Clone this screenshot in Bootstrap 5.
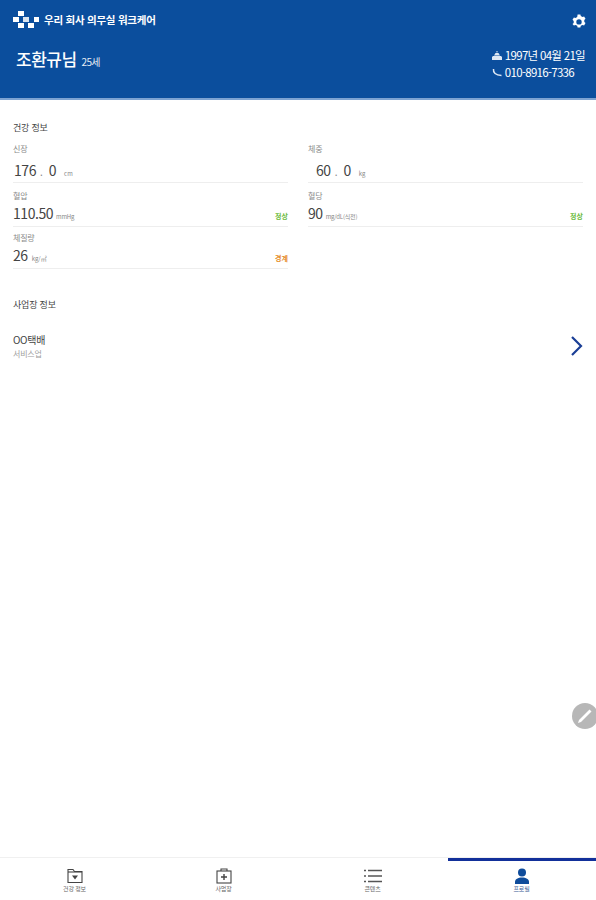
<!DOCTYPE html>
<html lang="ko">
<head>
<meta charset="utf-8">
<title>프로필</title>
<link href="https://cdn.jsdelivr.net/npm/bootstrap@5.3.0/dist/css/bootstrap.min.css" rel="stylesheet">
<style>
html,body{height:100%;overflow:hidden}
body{font-family:"Noto Sans CJK KR","Noto Sans",sans-serif;color:#333;background:#fff}
.app-shell{height:900px;position:relative}
.hero{height:100px;background:#0b4e9d;border-bottom:2px solid #7da3d2;color:#fff;padding:11px 11px 0 13px}
.brand-text{font-size:10.5px;font-weight:700;letter-spacing:-.25px;line-height:18px;margin-left:5px}
.gear{margin-top:3px;margin-right:-1px}
.hero-main{margin-top:14px;padding-left:3px}
.person{font-size:17px;font-weight:500;letter-spacing:-.5px;line-height:24px;padding-top:4px}
.person-age{font-size:10px;letter-spacing:-.7px;font-weight:400;margin-left:5px;opacity:.9}
.contact{font-size:11.5px;letter-spacing:-.7px;line-height:17px;margin-top:4px}
.contact div{display:flex;align-items:center;gap:3px}
.content{padding:21px 13px 0}
.sect{font-size:9px;line-height:14px;color:#444;letter-spacing:-.2px}
.cell-l{padding-right:10px}.cell-r{padding-left:10px}
.metric{border-bottom:1px solid #eeeeee}
.metric-a{height:40px;margin-top:8px}
.metric-b{height:37px;margin-top:7px}
.metric-c{height:37px;margin-top:5px}
.m-label{font-size:8px;line-height:12px;color:#8a8a8a;letter-spacing:-.2px}
.m-line{display:flex;align-items:baseline;line-height:18px;margin-top:2px}
.metric-a .m-line{margin-top:6px;padding-left:1px}
.cell-r .metric-a .m-line{padding-left:8px}
.num{font-size:14px;color:#444;letter-spacing:-.45px}
.dot{font-size:10px;color:#888;margin:0 6px 0 4px}
.unit{font-size:6px;color:#888;margin-left:4px}
.unit-wide{margin-left:3px;letter-spacing:-.2px}
.state{font-size:7px;font-weight:700;margin-left:auto}
.ok{color:#6cbb3c}.warn{color:#e58a1f}
.workplace{margin-top:16px;height:36px}
.wp-name{font-size:10px;line-height:14px;color:#444;letter-spacing:-.3px}
.wp-kind{font-size:8px;line-height:12px;color:#a0a0a0;letter-spacing:-.2px;margin-top:1px}
.section-gap{margin-top:29px}
.fab{position:absolute;left:572px;top:703px;width:26px;height:26px;border-radius:50%;background:#b7b7b7;display:flex;align-items:center;justify-content:center}
.tabbar{position:absolute;left:0;right:0;top:857px;height:43px;border-top:1px solid #f0f0f0;background:#fff}
.tab-item{flex:1 1 25%;display:flex;flex-direction:column;align-items:center;padding-top:10px;position:relative}
.tab-item.on::before{content:"";position:absolute;left:1px;right:0;top:0;height:3px;background:#12309a}
.tab-name{font-size:6px;line-height:8px;color:#666;margin-top:1px;letter-spacing:-.2px}
.tab-item.on .tab-name{color:#3a5a94}
</style>
</head>
<body>
<div class="app-shell">
  <header class="hero">
    <div class="d-flex align-items-center justify-content-between">
      <div class="d-flex align-items-center">
        <svg width="26" height="18" viewBox="0 0 26 18" fill="#fff"><rect x="5" y="0" width="6" height="5"/><rect x="0" y="6" width="6" height="5"/><rect x="10" y="6" width="6" height="5" opacity=".85"/><rect x="5" y="12" width="6" height="5"/><rect x="15" y="12" width="6" height="5"/><rect x="21" y="6" width="5" height="5"/></svg>
        <span class="brand-text">우리 회사 의무실 워크케어</span>
      </div>
      <svg class="gear" width="14" height="15" viewBox="0 0 14 14"><path fill="#fff" fill-rule="evenodd" d="M5.6 0h2.800l.4 1.600 1.700.8 1.600-.5 1.400 2.400-1.200 1.200v1.900l1.200 1.200-1.400 2.400-1.600-.5-1.700.8-.4 1.700H5.600l-.4-1.700-1.700-.8-1.600.5L.5 9.600l1.200-1.200V6.500L.5 5.300l1.400-2.400 1.600.5 1.700-.8zM7 4.700a2.700 2.700 0 1 0 0 5.400 2.700 2.700 0 0 0 0-5.400z"/></svg>
    </div>
    <div class="hero-main d-flex justify-content-between align-items-start">
      <div class="person">조환규님<span class="person-age">25세</span></div>
      <div class="contact">
        <div><svg width="10" height="9" viewBox="0 0 10 9" fill="#dfe8f4"><path d="M0 9V6l1-1h8l1 1v3zM2 4.500 3.500 2h3L8 4.500zM4.500 0h1v1.500h-1z"/></svg><span>1997년 04월 21일</span></div>
        <div><svg width="10" height="9" viewBox="0 0 10 9" fill="none" stroke="#dfe8f4" stroke-width="1.500"><path d="M1.500 1C1 4.500 3.500 7.500 9.500 7.500"/></svg><span>010-8916-7336</span></div>
      </div>
    </div>
  </header>

  <main class="content">
    <div class="sect">건강 정보</div>
    <div class="row g-0">
      <div class="col-6 cell-l">
        <div class="metric metric-a">
          <div class="m-label">신장</div>
          <div class="m-line"><span class="num">176</span><span class="dot">.</span><span class="num">0</span><span class="unit ms-2">cm</span></div>
        </div>
        <div class="metric metric-b">
          <div class="m-label">혈압</div>
          <div class="m-line"><span class="num">110.50</span><span class="unit unit-wide">mmHg</span><span class="state ok">정상</span></div>
        </div>
        <div class="metric metric-c">
          <div class="m-label">체질량</div>
          <div class="m-line"><span class="num">26</span><span class="unit">kg/㎡</span><span class="state warn">경계</span></div>
        </div>
      </div>
      <div class="col-6 cell-r">
        <div class="metric metric-a">
          <div class="m-label">체중</div>
          <div class="m-line"><span class="num">60</span><span class="dot">.</span><span class="num">0</span><span class="unit ms-2">kg</span></div>
        </div>
        <div class="metric metric-b">
          <div class="m-label">혈당</div>
          <div class="m-line"><span class="num">90</span><span class="unit unit-wide">mg/dL(식전)</span><span class="state ok">정상</span></div>
        </div>
      </div>
    </div>

    <div class="sect section-gap">사업장 정보</div>
    <div class="workplace d-flex align-items-center justify-content-between">
      <div>
        <div class="wp-name">OO택배</div>
        <div class="wp-kind">서비스업</div>
      </div>
      <svg width="13" height="20" viewBox="0 0 13 20" fill="none" stroke="#1b3f96" stroke-width="2.200"><path d="M2 1l9 9-9 9"/></svg>
    </div>
  </main>

  <div class="fab">
    <svg width="16" height="16" viewBox="0 0 16 16" fill="#fff"><path d="M12.500 1.500l2 2L4 14l-3 1 1-3z"/></svg>
  </div>

  <nav class="tabbar d-flex">
    <div class="tab-item">
      <svg width="16" height="16" viewBox="0 0 16 16" fill="none" stroke="#444" stroke-width="1.100"><path d="M1 14.500V1.500h5l1.500 2H15v11z"/><path d="M1 4h14"/><path fill="#444" stroke="none" d="M5 7.500h6L8 11.500z"/></svg>
      <span class="tab-name">건강 정보</span>
    </div>
    <div class="tab-item">
      <svg width="16" height="16" viewBox="0 0 16 16" fill="none" stroke="#444" stroke-width="1.100"><rect x="1" y="3" width="14" height="12"/><path d="M5 3V1h6v2"/><path stroke-width="1.400" d="M8 6v6M5 9h6"/></svg>
      <span class="tab-name">사업장</span>
    </div>
    <div class="tab-item">
      <svg width="18" height="16" viewBox="0 0 18 16" fill="none" stroke="#555" stroke-width="1.400"><path d="M4 2.500h14M4 8h14M4 13.500h14M0 2.500h2M0 8h2M0 13.500h2"/></svg>
      <span class="tab-name">콘텐츠</span>
    </div>
    <div class="tab-item on">
      <svg width="14" height="16" viewBox="0 0 14 16" fill="#0f4c9b"><circle cx="7" cy="4.500" r="4"/><path d="M0 16v-2c0-3 3-4.500 7-4.500s7 1.500 7 4.500v2z"/></svg>
      <span class="tab-name">프로필</span>
    </div>
  </nav>
</div>
<script src="https://cdn.jsdelivr.net/npm/bootstrap@5.3.0/dist/js/bootstrap.bundle.min.js"></script>
</body>
</html>
